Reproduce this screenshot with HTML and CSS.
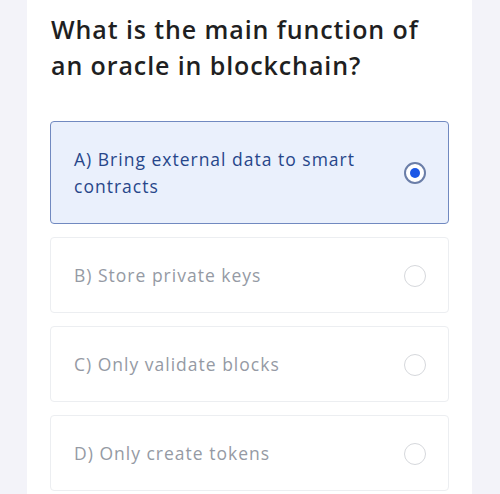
FILE: index.html
```html
<!DOCTYPE html>
<html>
<head>
<meta charset="utf-8">
<link rel="stylesheet" href="styles.css">
</head>
<body>
<div class="page">
  <div class="card">
    <h1 class="question">What is the main function of an oracle in blockchain?</h1>
    <div class="options">
      <div class="option selected">
        <span class="label">A) Bring external data to smart contracts</span>
        <span class="radio"><span class="dot"></span></span>
      </div>
      <div class="option">
        <span class="label">B) Store private keys</span>
        <span class="radio"></span>
      </div>
      <div class="option">
        <span class="label">C) Only validate blocks</span>
        <span class="radio"></span>
      </div>
      <div class="option">
        <span class="label">D) Only create tokens</span>
        <span class="radio"></span>
      </div>
    </div>
  </div>
</div>
</body>
</html>
```

FILE: styles.css
```css
html, body {
  margin: 0;
  padding: 0;
  background: #f3f3f9;
  font-family: "Open Sans", "Lato", sans-serif;
}
.page {
  padding: 0 28px 0 27px;
  height: 494px;
  overflow: hidden;
}
.card {
  background: #ffffff;
  height: 494px;
  padding: 11px 23px 0 23px;
  box-sizing: border-box;
}
.question {
  margin: 0 0 0 1px;
  font-size: 25px;
  font-weight: 600;
  line-height: 36px;
  color: #1f1f22;
  letter-spacing: 0.9px;
  width: 385px;
}
.options {
  margin-top: 38px;
  display: flex;
  flex-direction: column;
  gap: 13px;
}
.option {
  display: flex;
  align-items: center;
  justify-content: space-between;
  border: 1px solid #eceef1;
  border-radius: 4px;
  padding: 24px 22px 23px 23px;
  background: #ffffff;
}
.option .label {
  font-size: 17.5px;
  font-weight: 500;
  line-height: 27px;
  color: #959aa4;
  width: 300px;
  letter-spacing: 1px;
}
.option.selected {
  background: #eaf0fc;
  border-color: #7189c0;
}
.option.selected .label {
  color: #27468a;
}
.radio {
  width: 22px;
  height: 22px;
  box-sizing: border-box;
  border-radius: 50%;
  border: 1.5px solid #d6d8dc;
  display: flex;
  align-items: center;
  justify-content: center;
  flex: none;
  background: #ffffff;
}
.option.selected .radio {
  border: 2px solid #6b7ea8;
}
.dot {
  width: 10px;
  height: 10px;
  border-radius: 50%;
  background: #1b57e6;
}
```
